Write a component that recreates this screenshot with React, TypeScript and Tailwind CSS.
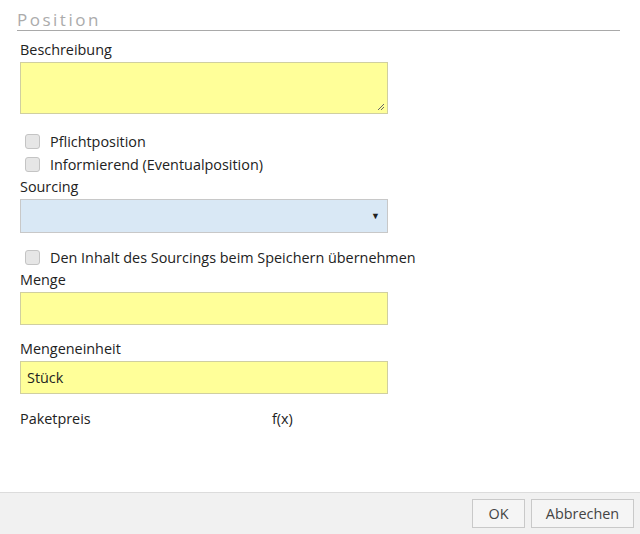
const Check = ({ label }: { label: string }) => (
  <label className="flex items-center h-[23px] pl-[5px]">
    <span className="w-[15px] h-[15px] rounded-[3px] border border-[#c4c4c4] bg-[#e6e6e6]" />
    <span className="ml-[10px] text-[14.4px] text-[#222]">{label}</span>
  </label>
);

const App = () => {
  return (
    <div
      className="w-[640px] h-[534px] bg-white flex flex-col"
      style={{ fontFamily: '"Open Sans", sans-serif' }}
    >
      <div className="flex-1 pl-[20px] pr-[20px]">
        {/* Header */}
        <div className="mt-[10px] ml-[-3px] border-b border-[#a9a9a9]">
          <h2 className="text-[17px] leading-[20px] tracking-[2.5px] text-[#ababab]">Position</h2>
        </div>

        <div className="mt-[9px] text-[14.4px] leading-[20px] text-[#222]">Beschreibung</div>
        <div className="relative mt-[2px] w-[368px] h-[52px] border border-[#d0cfa0] bg-[#ffff99]">
          <svg className="absolute right-[2px] bottom-[2px]" width="8" height="8" viewBox="0 0 8 8">
            <path d="M7 1L1 7M7 4L4 7" stroke="#666" strokeWidth="1" />
          </svg>
        </div>

        <div className="mt-[16px]">
          <Check label="Pflichtposition" />
          <Check label="Informierend (Eventualposition)" />
        </div>

        <div className="text-[14.4px] leading-[20px] text-[#222] mt-[1px]">Sourcing</div>
        <div className="mt-[2px] w-[368px] h-[34px] border border-[#c8c8c8] bg-[#d9e8f5] flex items-center justify-end pr-[7px]">
          <span className="text-[9px] text-[#222]">▼</span>
        </div>

        <div className="mt-[13px]">
          <Check label="Den Inhalt des Sourcings beim Speichern übernehmen" />
        </div>

        <div className="text-[14.4px] leading-[20px] text-[#222] mt-[1px]">Menge</div>
        <div className="mt-[2px] w-[368px] h-[33px] border border-[#d0cfa0] bg-[#ffff99]" />

        <div className="text-[14.4px] leading-[20px] text-[#222] mt-[14px]">Mengeneinheit</div>
        <div className="mt-[2px] w-[368px] h-[33px] border border-[#d0cfa0] bg-[#ffff99] flex items-center pl-[6px] text-[14.4px] text-[#222]">
          Stück
        </div>

        <div className="flex mt-[15px] text-[14.4px] leading-[20px] text-[#222]">
          <span className="w-[252px]">Paketpreis</span>
          <span>f(x)</span>
        </div>
      </div>

      {/* Footer */}
      <div className="h-[42px] border-t border-[#dcdcdc] bg-[#f1f1f1] flex items-center justify-end gap-[6px] pr-[6px]">
        <button className="w-[53px] h-[29px] border border-[#c9c9c9] bg-[#f5f5f5] text-[14.4px] text-[#444]">OK</button>
        <button className="w-[103px] h-[29px] border border-[#c9c9c9] bg-[#f5f5f5] text-[14.4px] text-[#444]">Abbrechen</button>
      </div>
    </div>
  );
};

export default App;
